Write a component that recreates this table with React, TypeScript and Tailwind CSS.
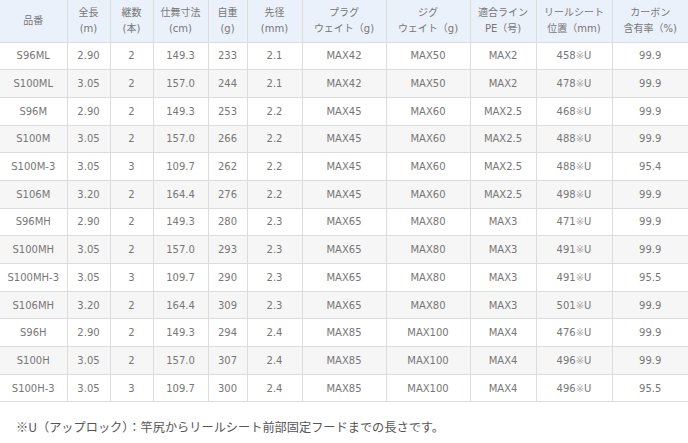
const heads: string[][] = [
  ["品番"],
  ["全長", "(m)"],
  ["継数", "(本)"],
  ["仕舞寸法", "(cm)"],
  ["自重", "(g)"],
  ["先径", "(mm)"],
  ["プラグ", "ウェイト（g)"],
  ["ジグ", "ウェイト（g)"],
  ["適合ライン", "PE（号)"],
  ["リールシート", "位置（mm)"],
  ["カーボン", "含有率（%)"],
];

const widths = ["w-[67px]", "w-[43px]", "w-[43px]", "w-[55px]", "w-[39px]", "w-[55px]", "w-[84px]", "w-[84px]", "w-[66px]", "w-[76px]", "w-[76px]"];

const rows: string[][] = [
  ["S96ML", "2.90", "2", "149.3", "233", "2.1", "MAX42", "MAX50", "MAX2", "458※U", "99.9"],
  ["S100ML", "3.05", "2", "157.0", "244", "2.1", "MAX42", "MAX50", "MAX2", "478※U", "99.9"],
  ["S96M", "2.90", "2", "149.3", "253", "2.2", "MAX45", "MAX60", "MAX2.5", "468※U", "99.9"],
  ["S100M", "3.05", "2", "157.0", "266", "2.2", "MAX45", "MAX60", "MAX2.5", "488※U", "99.9"],
  ["S100M-3", "3.05", "3", "109.7", "262", "2.2", "MAX45", "MAX60", "MAX2.5", "488※U", "95.4"],
  ["S106M", "3.20", "2", "164.4", "276", "2.2", "MAX45", "MAX60", "MAX2.5", "498※U", "99.9"],
  ["S96MH", "2.90", "2", "149.3", "280", "2.3", "MAX65", "MAX80", "MAX3", "471※U", "99.9"],
  ["S100MH", "3.05", "2", "157.0", "293", "2.3", "MAX65", "MAX80", "MAX3", "491※U", "99.9"],
  ["S100MH-3", "3.05", "3", "109.7", "290", "2.3", "MAX65", "MAX80", "MAX3", "491※U", "95.5"],
  ["S106MH", "3.20", "2", "164.4", "309", "2.3", "MAX65", "MAX80", "MAX3", "501※U", "99.9"],
  ["S96H", "2.90", "2", "149.3", "294", "2.4", "MAX85", "MAX100", "MAX4", "476※U", "99.9"],
  ["S100H", "3.05", "2", "157.0", "307", "2.4", "MAX85", "MAX100", "MAX4", "496※U", "99.9"],
  ["S100H-3", "3.05", "3", "109.7", "300", "2.4", "MAX85", "MAX100", "MAX4", "496※U", "95.5"],
];

export default function App() {
  return (
    <div className="w-[688px] h-[443px] bg-white overflow-hidden text-[#777] font-['DejaVu_Sans','Noto_Sans_CJK_JP',sans-serif]">
      <table className="w-[688px] table-fixed border-collapse text-[10px]">
        <colgroup>
          {widths.map((w, i) => (
            <col key={i} className={w} />
          ))}
        </colgroup>
        <thead>
          <tr className="h-[42px] bg-[#eaf1fa]">
            {heads.map((h, i) => (
              <th
                key={i}
                className="font-normal leading-[16px] text-center border-r border-b border-[#dcdcdc] last:border-r-0 p-0"
              >
                {h.map((l, j) => (
                  <div key={j} className="whitespace-nowrap">{l}</div>
                ))}
              </th>
            ))}
          </tr>
        </thead>
        <tbody>
          {rows.map((r, i) => (
            <tr key={r[0]} className={`h-[27.7px] ${i % 2 === 1 ? "bg-[#f6f6f6]" : "bg-white"}`}>
              {r.map((c, j) => (
                <td
                  key={j}
                  className="text-center border-r border-b border-[#dcdcdc] last:border-r-0 p-0 whitespace-nowrap"
                >
                  {c.includes("※") ? (
                    <>
                      {c.replace("※U", "")}
                      <span className="text-[#aaa]">※</span>U
                    </>
                  ) : (
                    c
                  )}
                </td>
              ))}
            </tr>
          ))}
        </tbody>
      </table>
      <p className="mt-[16px] pl-[16px] text-[12.2px] text-[#555] font-['Noto_Sans_CJK_JP',sans-serif]">
        ※U（アップロック）：竿尻からリールシート前部固定フードまでの長さです。
      </p>
    </div>
  );
}
